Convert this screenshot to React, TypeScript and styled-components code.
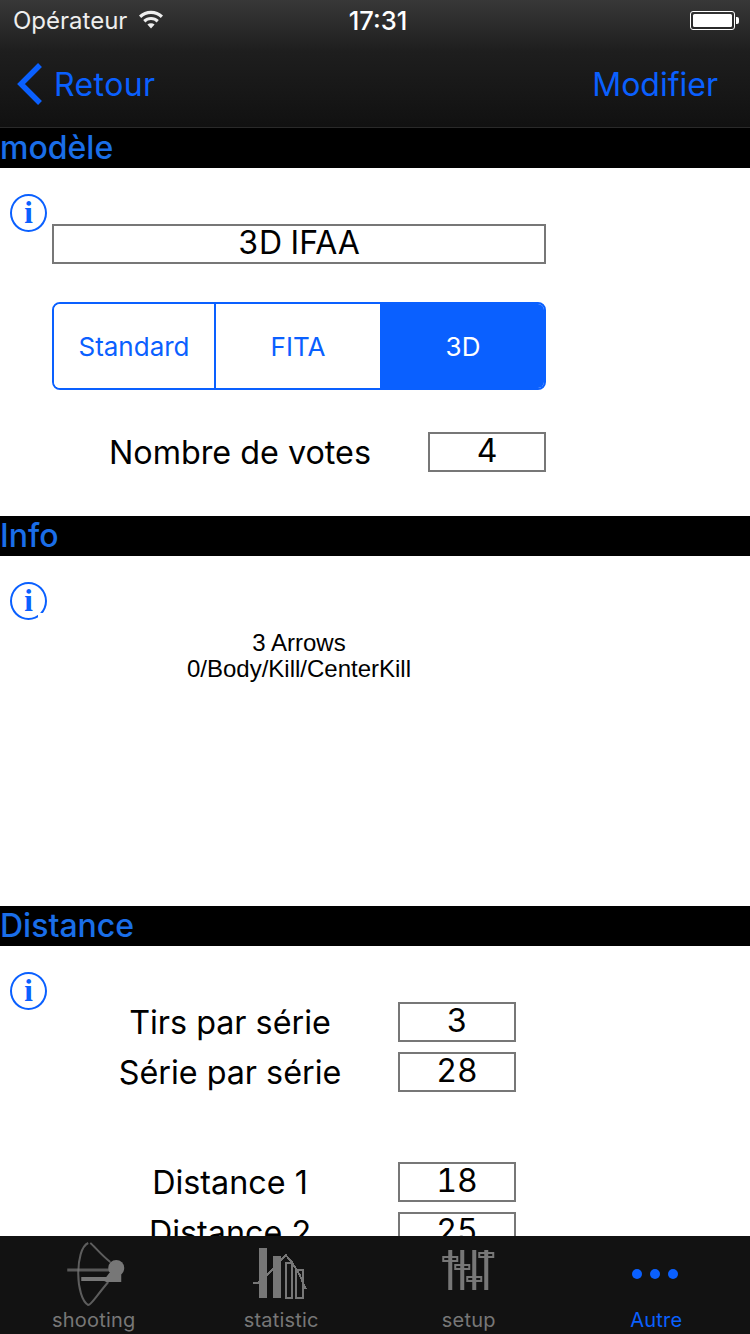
import React from 'react'
import styled, { createGlobalStyle } from 'styled-components'

const BLUE = '#0a60ff'
const GREY = '#777777'

const GlobalStyle = createGlobalStyle`
  html, body {
    margin: 0;
    padding: 0;
    background: #fff;
  }
  * {
    box-sizing: border-box;
  }
`

const Page = styled.div`
  width: 750px;
  height: 1334px;
  display: flex;
  flex-direction: column;
  overflow: hidden;
  font-family: Inter, "Liberation Sans", sans-serif;
  color: #000;
`

const TopBar = styled.header`
  flex: none;
  height: 128px;
  background: linear-gradient(#383838 0%, #1e1e1e 40%, #111 100%);
  border-bottom: 1px solid #2a2a2a;
`

const StatusBar = styled.div`
  height: 40px;
  padding: 0 11px 0 13px;
  display: grid;
  grid-template-columns: 1fr auto 1fr;
  align-items: center;
  color: #fff;
  font-size: 24px;
`

const Carrier = styled.div`
  display: flex;
  align-items: center;
  gap: 11px;
  color: #eee;
`

const Clock = styled.div`
  font-size: 25.5px;
  font-weight: 500;
  margin-left: 4px;
`

const Battery = styled.div`
  justify-self: end;
  display: flex;
  align-items: center;
`

const BatteryBody = styled.div`
  width: 45px;
  height: 19px;
  padding: 2px;
  border: 1px solid #fff;
  border-radius: 3px;

  &::before {
    content: '';
    display: block;
    height: 100%;
    background: #fff;
    border-radius: 1.5px;
  }
`

const BatteryCap = styled.div`
  width: 3px;
  height: 7px;
  background: #fff;
  margin-left: 1px;
  border-radius: 0 2px 2px 0;
`

const NavBar = styled.nav`
  height: 87px;
  padding: 1px 32px 0 17px;
  display: flex;
  align-items: center;
  justify-content: space-between;
  color: ${BLUE};
  font-size: 32px;
`

const BackLink = styled.div`
  display: flex;
  align-items: center;
  gap: 12px;
  letter-spacing: 0.4px;
`

const Content = styled.main`
  flex: 1;
  min-height: 0;
  overflow: hidden;
`

const SectionTitle = styled.h2`
  margin: 0;
  height: 40px;
  background: #000;
  color: #1a6ee8;
  font-size: 32px;
  font-weight: 500;
  line-height: 40px;
`

const SectionBody = styled.section<{ $height?: number }>`
  display: flex;
  height: ${(p) => (p.$height ? `${p.$height}px` : 'auto')};
`

const InfoColumn = styled.div<{ $top: number }>`
  flex: none;
  width: 52px;
  padding: ${(p) => p.$top}px 0 0 10px;
`

const InfoIcon = styled.div<{ $notched?: boolean }>`
  position: relative;
  width: 37px;
  height: 38px;
  border: 2px solid ${BLUE};
  border-radius: 50%;
  color: ${BLUE};
  font-family: "Liberation Serif", serif;
  font-size: 31px;
  font-weight: 700;
  line-height: 33px;
  text-align: center;

  &::after {
    content: '';
    display: ${(p) => (p.$notched ? 'block' : 'none')};
    position: absolute;
    right: 2px;
    bottom: 0;
    width: 5px;
    height: 5px;
    background: #fff;
  }
`

const Column = styled.div<{ $top: number }>`
  flex: none;
  width: 494px;
  padding-top: ${(p) => p.$top}px;
`

const ValueBox = styled.div<{ $width?: number }>`
  flex: none;
  width: ${(p) => (p.$width ? `${p.$width}px` : '100%')};
  height: 40px;
  border: 2px solid ${GREY};
  font-size: 32px;
  font-variant-numeric: tabular-nums;
  line-height: 33px;
  text-align: center;
  white-space: nowrap;
`

const Segments = styled.div`
  margin-top: 38px;
  height: 88px;
  display: grid;
  grid-template-columns: 160px 166px 164px;
  border: 2px solid ${BLUE};
  border-radius: 8px;
  overflow: hidden;
`

const Segment = styled.div<{ $active?: boolean }>`
  display: flex;
  align-items: center;
  justify-content: center;
  color: ${(p) => (p.$active ? '#fff' : BLUE)};
  background: ${(p) => (p.$active ? BLUE : '#fff')};
  font-size: 26px;
  & + & {
    border-left: 2px solid ${BLUE};
  }
`

const Row = styled.div<{ $top?: number }>`
  display: flex;
  margin-top: ${(p) => p.$top ?? 0}px;
`

const RowLabel = styled.div`
  flex: 1;
  height: 40px;
  font-size: 32.3px;
  line-height: 42px;
  text-align: center;
  white-space: nowrap;
`

const DistanceRows = styled.div`
  width: 464px;
  padding-left: 10px;
`

const InfoText = styled.p`
  margin: 0;
  font-family: "Liberation Sans", Arial, sans-serif;
  font-size: 24px;
  line-height: 26px;
  text-align: center;
`

const TabBar = styled.footer`
  flex: none;
  height: 98px;
  background: #121212;
  display: grid;
  grid-template-columns: repeat(4, 1fr);
`

const Tab = styled.div<{ $active?: boolean }>`
  display: flex;
  flex-direction: column;
  align-items: center;
  padding-top: 4px;
  color: ${(p) => (p.$active ? BLUE : GREY)};
  font-size: 20px;
  letter-spacing: 0.2px;
`

const TabIcon = styled.svg`
  display: block;
  width: 100px;
  height: 70px;
`

const TabLabel = styled.span`
  line-height: 24px;
  margin-top: -2px;
`

const WifiIcon = () => (
  <svg width="26" height="20" viewBox="0 0 26 20" fill="#eee">
    <path d="M13 18.5 9.4 14.6a5.2 5.2 0 0 1 7.2 0Z" />
    <path d="M7.3 12.4 5.2 10.1a11.3 11.3 0 0 1 15.6 0l-2.1 2.3a8.2 8.2 0 0 0-11.4 0Z" />
    <path d="M3.2 7.9 1 5.6a17.2 17.2 0 0 1 24 0l-2.2 2.3a14.1 14.1 0 0 0-19.6 0Z" />
  </svg>
)

const BowIcon = () => (
  <TabIcon viewBox="3.75 0 100 70" fill="none" stroke={GREY}>
    <path d="M48 3C41 6 38 20 38 34C38 48 42 62 48 65C51 65 56 56 68 42M50 3C54 6 60 14 70 22" strokeWidth="2" opacity="0.75" />
    <path d="M27 30H70" strokeWidth="3" opacity="0.7" />
    <circle cx="76" cy="28" r="8" fill={GREY} stroke="none" />
    <path d="M41 37H66L69 33H81V42H66L64 41H41Z" fill={GREY} stroke="none" />
  </TabIcon>
)

const StatisticIcon = () => (
  <TabIcon viewBox="-8.75 0 100 70" fill="none" stroke={GREY} shapeRendering="crispEdges">
    <rect x="19" y="8" width="8" height="50" fill={GREY} stroke="none" />
    <rect x="33" y="16" width="8" height="42" fill={GREY} stroke="none" />
    <rect x="46" y="23" width="6" height="35" strokeWidth="2" />
    <rect x="56" y="30" width="7" height="28" strokeWidth="2" />
    <path d="M13 43H18L28 34L40 22L46 15L52 22L60 35L66 49" strokeWidth="2" />
  </TabIcon>
)

const SetupIcon = () => (
  <TabIcon viewBox="-11.25 0 100 70" fill={GREY}>
    <g fill="#121212" stroke={GREY} strokeWidth="2">
      <rect x="13" y="17" width="14" height="4" />
      <rect x="25" y="25" width="14" height="4" />
      <rect x="37" y="37" width="14" height="4" />
      <rect x="49" y="13" width="14" height="4" />
    </g>
    <rect x="18" y="10" width="4" height="40" />
    <rect x="30" y="10" width="4" height="40" />
    <rect x="42" y="10" width="4" height="40" />
    <rect x="54" y="10" width="4" height="40" />
  </TabIcon>
)

const MoreIcon = () => (
  <TabIcon viewBox="0 0 100 70" fill={BLUE}>
    <circle cx="31" cy="34" r="5" />
    <circle cx="49" cy="34" r="5" />
    <circle cx="67" cy="34" r="5" />
  </TabIcon>
)

export default function App() {
  return (
    <Page>
      <GlobalStyle />
      <TopBar>
        <StatusBar>
          <Carrier>
            Opérateur
            <WifiIcon />
          </Carrier>
          <Clock>17:31</Clock>
          <Battery>
            <BatteryBody />
            <BatteryCap />
          </Battery>
        </StatusBar>
        <NavBar>
          <BackLink>
            <svg width="25" height="42" viewBox="0 0 25 42" fill="none" stroke={BLUE} strokeWidth="5.5">
              <path d="M23 2 4 21 23 40" />
            </svg>
            Retour
          </BackLink>
          Modifier
        </NavBar>
      </TopBar>
      <Content>
        <SectionTitle>modèle</SectionTitle>
        <SectionBody $height={348}>
          <InfoColumn $top={26}>
            <InfoIcon>i</InfoIcon>
          </InfoColumn>
          <Column $top={56}>
            <ValueBox>3D IFAA</ValueBox>
            <Segments>
              <Segment>Standard</Segment>
              <Segment>FITA</Segment>
              <Segment $active>3D</Segment>
            </Segments>
            <Row $top={42}>
              <RowLabel>Nombre de votes</RowLabel>
              <ValueBox $width={118}>4</ValueBox>
            </Row>
          </Column>
        </SectionBody>
        <SectionTitle>Info</SectionTitle>
        <SectionBody $height={350}>
          <InfoColumn $top={26}>
            <InfoIcon $notched>i</InfoIcon>
          </InfoColumn>
          <Column $top={74}>
            <InfoText>
              3 Arrows
              <br />
              0/Body/Kill/CenterKill
            </InfoText>
          </Column>
        </SectionBody>
        <SectionTitle>Distance</SectionTitle>
        <SectionBody>
          <InfoColumn $top={26}>
            <InfoIcon>i</InfoIcon>
          </InfoColumn>
          <Column $top={56}>
            <DistanceRows>
              <Row>
                <RowLabel>Tirs par série</RowLabel>
                <ValueBox $width={118}>3</ValueBox>
              </Row>
              <Row $top={10}>
                <RowLabel>Série par série</RowLabel>
                <ValueBox $width={118}>28</ValueBox>
              </Row>
              <Row $top={70}>
                <RowLabel>Distance 1</RowLabel>
                <ValueBox $width={118}>18</ValueBox>
              </Row>
              <Row $top={10}>
                <RowLabel>Distance 2</RowLabel>
                <ValueBox $width={118}>25</ValueBox>
              </Row>
            </DistanceRows>
          </Column>
        </SectionBody>
      </Content>
      <TabBar>
        <Tab>
          <BowIcon />
          <TabLabel>shooting</TabLabel>
        </Tab>
        <Tab>
          <StatisticIcon />
          <TabLabel>statistic</TabLabel>
        </Tab>
        <Tab>
          <SetupIcon />
          <TabLabel>setup</TabLabel>
        </Tab>
        <Tab $active>
          <MoreIcon />
          <TabLabel>Autre</TabLabel>
        </Tab>
      </TabBar>
    </Page>
  )
}
